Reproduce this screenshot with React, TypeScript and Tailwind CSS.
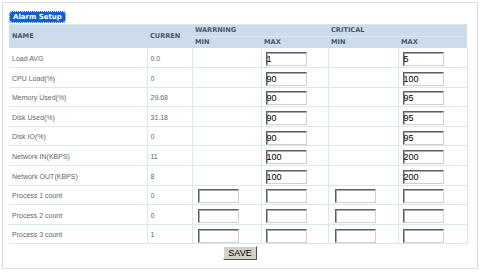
type Row = {
  name: string;
  current: string;
  warnMax?: string;
  critMax?: string;
  all?: boolean;
};

const rows: Row[] = [
  { name: "Load AVG", current: "0.0", warnMax: "1", critMax: "5" },
  { name: "CPU Load(%)", current: "0", warnMax: "90", critMax: "100" },
  { name: "Memory Used(%)", current: "29.68", warnMax: "90", critMax: "95" },
  { name: "Disk Used(%)", current: "31.18", warnMax: "90", critMax: "95" },
  { name: "Disk IO(%)", current: "0", warnMax: "90", critMax: "95" },
  { name: "Network IN(KBPS)", current: "11", warnMax: "100", critMax: "200" },
  { name: "Network OUT(KBPS)", current: "8", warnMax: "100", critMax: "200" },
  { name: "Process 1 count", current: "0", all: true },
  { name: "Process 2 count", current: "0", all: true },
  { name: "Process 3 count", current: "1", all: true },
];

function Box({ value }: { value?: string }) {
  return (
    <input
      type="text"
      defaultValue={value ?? ""}
      className="block w-[41px] h-[14px] bg-white border border-t-[#5f5f5f] border-l-[#5f5f5f] border-b-[#d0d0d0] border-r-[#d0d0d0] shadow-[inset_1px_1px_0_#a8a8a8] pl-0 text-[9px] leading-[12px] text-black outline-none"
      style={{ fontFamily: '"Liberation Sans", Arial, sans-serif' }}
    />
  );
}

const cell = "border-r border-b border-[#d5ebe4] h-[19.6px] pt-[3px] pb-0 align-middle";
const th = "text-left font-bold text-[6.6px] text-[#4a5868] h-[11px] align-middle pl-[3px] leading-[11px]";

export default function App() {
  return (
    <div
      className="w-[480px] h-[272px] bg-white pt-[2px] pl-[2px]"
      style={{ fontFamily: '"Liberation Sans", Arial, sans-serif' }}
    >
      <div className="w-[476px] h-[267px] border border-[#dcdcdc] pl-[6px] pt-[8px]">
        <div className="flex h-[12px]">
          <span
            className="block bg-[#0b62d2] bg-clip-padding border border-dotted border-[#0b62d2] rounded-[3px] px-[3px] text-[7px] leading-[10px] font-bold text-white"
            style={{ fontFamily: '"DejaVu Sans", Verdana, sans-serif' }}
          >
            Alarm Setup
          </span>
        </div>

        <table className="border-collapse table-fixed w-[458px] mt-[1px]">
          <colgroup>
            <col className="w-[138px]" />
            <col className="w-[45px]" />
            <col className="w-[69px]" />
            <col className="w-[67px]" />
            <col className="w-[70px]" />
            <col className="w-[69px]" />
          </colgroup>
          <thead
            className="bg-[#ccdcec]"
            style={{ fontFamily: '"DejaVu Sans", Verdana, sans-serif' }}
          >
            <tr className="border-t border-[#d5ebe4]">
              <th rowSpan={2} className={th}>NAME</th>
              <th rowSpan={2} className={th}>CURREN</th>
              <th colSpan={2} className={`${th} border-b border-[#d9e6ee]`}>WARRNING</th>
              <th colSpan={2} className={`${th} border-b border-[#d9e6ee]`}>CRITICAL</th>
            </tr>
            <tr>
              <th className={th}>MIN</th>
              <th className={th}>MAX</th>
              <th className={th}>MIN</th>
              <th className={th}>MAX</th>
            </tr>
          </thead>
          <tbody className="text-[7px] text-[#666666]">
            {rows.map((r) => (
              <tr key={r.name}>
                <td className={`${cell} pl-[3px]`}>{r.name}</td>
                <td className={`${cell} pl-[3px]`}>{r.current}</td>
                <td className={`${cell} pl-[5px]`}>{r.all && <Box />}</td>
                <td className={`${cell} pl-[4px]`}><Box value={r.warnMax} /></td>
                <td className={`${cell} pl-[6px]`}>{r.all && <Box />}</td>
                <td className={`${cell} pl-[4px]`}><Box value={r.critMax} /></td>
              </tr>
            ))}
          </tbody>
        </table>

        <div className="flex justify-center pr-[6px] mt-[2px]">
          <button className="w-[34px] h-[14px] bg-[#d4d0c8] border border-t-white border-l-white border-b-[#505050] border-r-[#505050] text-[9px] leading-[12px] text-black">
            SAVE
          </button>
        </div>
      </div>
    </div>
  );
}
